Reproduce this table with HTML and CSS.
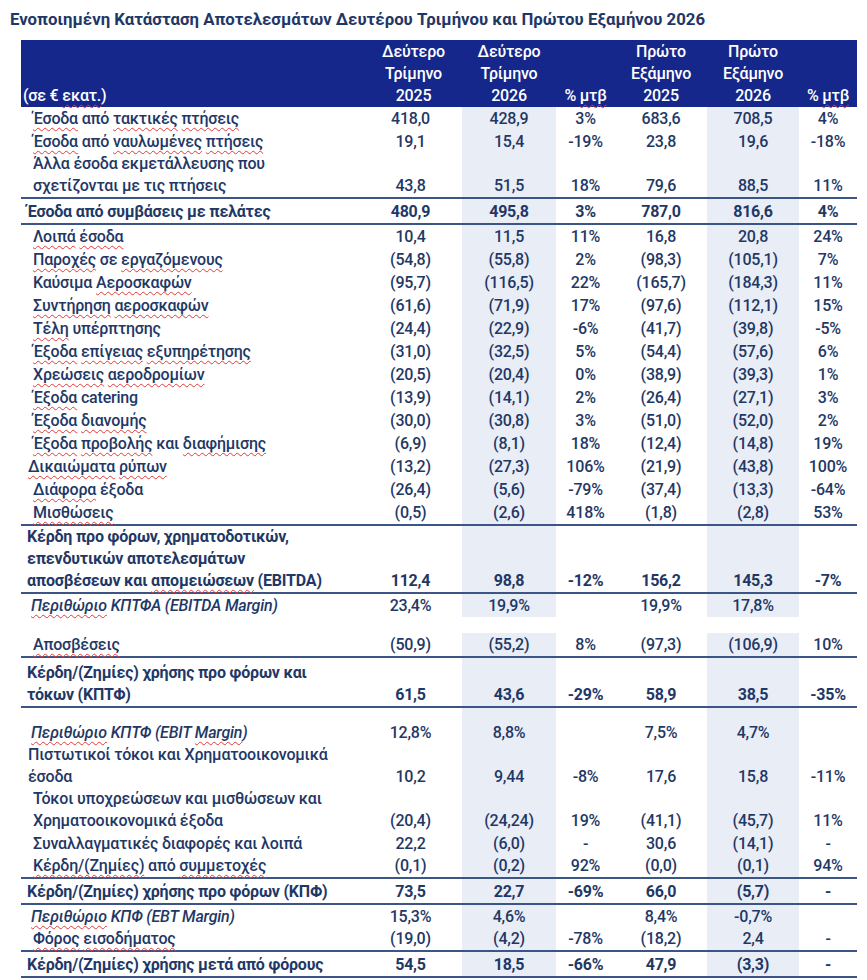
FILE: index.html
```html
<!DOCTYPE html>
<html lang="el">
  <head>
    <meta charset="UTF-8" />
    <meta name="viewport" content="width=device-width, initial-scale=1.0" />
    <title>Ενοποιημένη Κατάσταση Αποτελεσμάτων</title>
    <link rel="stylesheet" href="styles.css">
  </head>
  <body>
    <h1 class="title">Ενοποιημένη Κατάσταση Αποτελεσμάτων Δευτέρου Τριμήνου και Πρώτου Εξαμήνου 2026</h1>
    <table class="results">
      <colgroup>
        <col class="c-label">
        <col class="c-num">
        <col class="c-num2 shade">
        <col class="c-pct">
        <col class="c-num3">
        <col class="c-num3 shade">
        <col class="c-pct2">
      </colgroup>
      <thead>
        <tr>
          <th class="label">(σε € <span class="sp">εκατ.</span>)</th>
          <th>Δεύτερο<br>Τρίμηνο<br>2025</th>
          <th>Δεύτερο<br>Τρίμηνο<br>2026</th>
          <th>% <span class="sp">μτβ</span></th>
          <th>Πρώτο<br>Εξάμηνο<br>2025</th>
          <th>Πρώτο<br>Εξάμηνο<br>2026</th>
          <th>% <span class="sp">μτβ</span></th>
        </tr>
      </thead>
      <tbody>
        <tr>
          <td class="label"><span class="sp">Έσοδα</span> από <span class="sp">τακτικές</span> <span class="sp">πτήσεις</span></td>
          <td>418,0</td><td>428,9</td><td>3%</td><td>683,6</td><td>708,5</td><td>4%</td>
        </tr>
        <tr>
          <td class="label"><span class="sp">Έσοδα</span> από <span class="sp">ναυλωμένες</span> <span class="sp">πτήσεις</span></td>
          <td>19,1</td><td>15,4</td><td>-19%</td><td>23,8</td><td>19,6</td><td>-18%</td>
        </tr>
        <tr class="rule">
          <td class="label">Άλλα έσοδα εκμετάλλευσης που<br>σχετίζονται με τις πτήσεις</td>
          <td>43,8</td><td>51,5</td><td>18%</td><td>79,6</td><td>88,5</td><td>11%</td>
        </tr>
        <tr class="rule total">
          <td class="label">Έσοδα από συμβάσεις με πελάτες</td>
          <td>480,9</td><td>495,8</td><td>3%</td><td>787,0</td><td>816,6</td><td>4%</td>
        </tr>
        <tr>
          <td class="label"><span class="sp">Λοιπά</span> <span class="sp">έσοδα</span></td>
          <td>10,4</td><td>11,5</td><td>11%</td><td>16,8</td><td>20,8</td><td>24%</td>
        </tr>
        <tr>
          <td class="label"><span class="sp">Παροχές</span> σε <span class="sp">εργαζόμενους</span></td>
          <td>(54,8)</td><td>(55,8)</td><td>2%</td><td>(98,3)</td><td>(105,1)</td><td>7%</td>
        </tr>
        <tr>
          <td class="label">Καύσιμα <span class="sp">Αεροσκαφών</span></td>
          <td>(95,7)</td><td>(116,5)</td><td>22%</td><td>(165,7)</td><td>(184,3)</td><td>11%</td>
        </tr>
        <tr>
          <td class="label"><span class="sp">Συντήρηση</span> <span class="sp">αεροσκαφών</span></td>
          <td>(61,6)</td><td>(71,9)</td><td>17%</td><td>(97,6)</td><td>(112,1)</td><td>15%</td>
        </tr>
        <tr>
          <td class="label"><span class="sp">Τέλη</span> υπέρπτησης</td>
          <td>(24,4)</td><td>(22,9)</td><td>-6%</td><td>(41,7)</td><td>(39,8)</td><td>-5%</td>
        </tr>
        <tr>
          <td class="label"><span class="sp">Έξοδα</span> <span class="sp">επίγειας</span> <span class="sp">εξυπηρέτησης</span></td>
          <td>(31,0)</td><td>(32,5)</td><td>5%</td><td>(54,4)</td><td>(57,6)</td><td>6%</td>
        </tr>
        <tr>
          <td class="label"><span class="sp">Χρεώσεις</span> <span class="sp">αεροδρομίων</span></td>
          <td>(20,5)</td><td>(20,4)</td><td>0%</td><td>(38,9)</td><td>(39,3)</td><td>1%</td>
        </tr>
        <tr>
          <td class="label"><span class="sp">Έξοδα</span> catering</td>
          <td>(13,9)</td><td>(14,1)</td><td>2%</td><td>(26,4)</td><td>(27,1)</td><td>3%</td>
        </tr>
        <tr>
          <td class="label"><span class="sp">Έξοδα</span> <span class="sp">διανομής</span></td>
          <td>(30,0)</td><td>(30,8)</td><td>3%</td><td>(51,0)</td><td>(52,0)</td><td>2%</td>
        </tr>
        <tr>
          <td class="label"><span class="sp">Έξοδα</span> <span class="sp">προβολής</span> και <span class="sp">διαφήμισης</span></td>
          <td>(6,9)</td><td>(8,1)</td><td>18%</td><td>(12,4)</td><td>(14,8)</td><td>19%</td>
        </tr>
        <tr>
          <td class="label in-6"><span class="sp">Δικαιώματα</span> <span class="sp">ρύπων</span></td>
          <td>(13,2)</td><td>(27,3)</td><td>106%</td><td>(21,9)</td><td>(43,8)</td><td>100%</td>
        </tr>
        <tr>
          <td class="label"><span class="sp">Διάφορα</span> έξοδα</td>
          <td>(26,4)</td><td>(5,6)</td><td>-79%</td><td>(37,4)</td><td>(13,3)</td><td>-64%</td>
        </tr>
        <tr class="rule">
          <td class="label"><span class="sp">Μισθώσεις</span></td>
          <td>(0,5)</td><td>(2,6)</td><td>418%</td><td>(1,8)</td><td>(2,8)</td><td>53%</td>
        </tr>
        <tr class="rule total">
          <td class="label">Κέρδη προ φόρων, χρηματοδοτικών,<br>επενδυτικών αποτελεσμάτων<br>αποσβέσεων και <span class="sp">απομειώσεων</span> (EBITDA)</td>
          <td>112,4</td><td>98,8</td><td>-12%</td><td>156,2</td><td>145,3</td><td>-7%</td>
        </tr>
        <tr>
          <td class="label margin"><span class="sp">Περιθώριο</span> ΚΠΤΦΑ (EBITDA Margin)</td>
          <td>23,4%</td><td>19,9%</td><td></td><td>19,9%</td><td>17,8%</td><td></td>
        </tr>
        <tr class="gap"><td colspan="7"></td></tr>
        <tr class="rule">
          <td class="label"><span class="sp">Αποσβέσεις</span></td>
          <td>(50,9)</td><td>(55,2)</td><td>8%</td><td>(97,3)</td><td>(106,9)</td><td>10%</td>
        </tr>
        <tr class="rule total two">
          <td class="label">Κέρδη/(Ζημίες) χρήσης προ φόρων και<br>τόκων (ΚΠΤΦ)</td>
          <td>61,5</td><td>43,6</td><td>-29%</td><td>58,9</td><td>38,5</td><td>-35%</td>
        </tr>
        <tr class="tall">
          <td class="label margin"><span class="sp">Περιθώριο</span> ΚΠΤΦ (EBIT <span class="sp">Margin</span>)</td>
          <td>12,8%</td><td>8,8%</td><td></td><td>7,5%</td><td>4,7%</td><td></td>
        </tr>
        <tr>
          <td class="label in-6">Πιστωτικοί τόκοι και Χρηματοοικονομικά<br>έσοδα</td>
          <td>10,2</td><td>9,44</td><td>-8%</td><td>17,6</td><td>15,8</td><td>-11%</td>
        </tr>
        <tr>
          <td class="label">Τόκοι υποχρεώσεων και μισθώσεων και<br>Χρηματοοικονομικά έξοδα</td>
          <td>(20,4)</td><td>(24,24)</td><td>19%</td><td>(41,1)</td><td>(45,7)</td><td>11%</td>
        </tr>
        <tr>
          <td class="label">Συναλλαγματικές διαφορές και λοιπά</td>
          <td>22,2</td><td>(6,0)</td><td>-</td><td>30,6</td><td>(14,1)</td><td>-</td>
        </tr>
        <tr class="rule short">
          <td class="label"><span class="sp">Κέρδη/(Ζημίες)</span> από <span class="sp">συμμετοχές</span></td>
          <td>(0,1)</td><td>(0,2)</td><td>92%</td><td>(0,0)</td><td>(0,1)</td><td>94%</td>
        </tr>
        <tr class="rule total">
          <td class="label">Κέρδη/(Ζημίες) χρήσης προ φόρων (ΚΠΦ)</td>
          <td>73,5</td><td>22,7</td><td>-69%</td><td>66,0</td><td>(5,7)</td><td>-</td>
        </tr>
        <tr>
          <td class="label margin"><span class="sp">Περιθώριο</span> ΚΠΦ (EBT Margin)</td>
          <td>15,3%</td><td>4,6%</td><td></td><td>8,4%</td><td>-0,7%</td><td></td>
        </tr>
        <tr class="rule short">
          <td class="label"><span class="sp">Φόρος</span> <span class="sp">εισοδήματος</span></td>
          <td>(19,0)</td><td>(4,2)</td><td>-78%</td><td>(18,2)</td><td>2,4</td><td>-</td>
        </tr>
        <tr class="rule total">
          <td class="label">Κέρδη/(Ζημίες) χρήσης μετά από φόρους</td>
          <td>54,5</td><td>18,5</td><td>-66%</td><td>47,9</td><td>(3,3)</td><td>-</td>
        </tr>
      </tbody>
    </table>
  </body>
</html>
```

FILE: styles.css
```css
/* styles.css */

body {
  margin: 0;
  padding: 8px 10px;
  background-color: #fff;
  color: #1f3866;
  font-family: Roboto, "Noto Sans", sans-serif;
  font-size: 16px;
  letter-spacing: -0.2px;
}

.title {
  margin: 0 0 10px;
  font-size: 16.8px;
  line-height: 22px;
  font-weight: 700;
  letter-spacing: 0;
  color: #1f3766;
}

.results {
  margin-left: 11px;
  width: 836px;
  table-layout: fixed;
  border-collapse: collapse;
  font-weight: 500;
}

.c-label { width: 344px; }
.c-num { width: 97px; }
.c-num2 { width: 94px; }
.c-pct { width: 59px; }
.c-num3 { width: 92px; }
.c-pct2 { width: 58px; }

.shade {
  background-color: #e9edf6;
}

.results th {
  height: 67px;
  padding: 0;
  background-color: #15278a;
  color: #fff;
  font-weight: 500;
  line-height: 22px;
  text-align: center;
  vertical-align: bottom;
}

.results th.label {
  padding-left: 2px;
  text-align: left;
}

.results td {
  height: 23px;
  padding: 0;
  line-height: 22px;
  text-align: center;
  vertical-align: bottom;
  white-space: nowrap;
}

.results td:nth-child(2) {
  padding-right: 6px;
}

.results td.label {
  padding-left: 12px;
  text-align: left;
}

.results td.in-6 {
  padding-left: 7px;
}

.results td.margin {
  padding-left: 10px;
  font-style: italic;
}

.rule td {
  border-bottom: 2px solid #3a5586;
}

.total td {
  height: 24px;
  font-weight: 700;
}

.total td.label {
  padding-left: 6px;
}

.total.two td {
  height: 48px;
}

.short td {
  height: 22px;
}

.gap td {
  height: 16px;
}

.tall td {
  height: 36px;
}

.sp {
  text-decoration: underline wavy #e23a3a;
  text-decoration-thickness: 1px;
  text-underline-offset: 3px;
  text-decoration-skip-ink: none;
}
```
